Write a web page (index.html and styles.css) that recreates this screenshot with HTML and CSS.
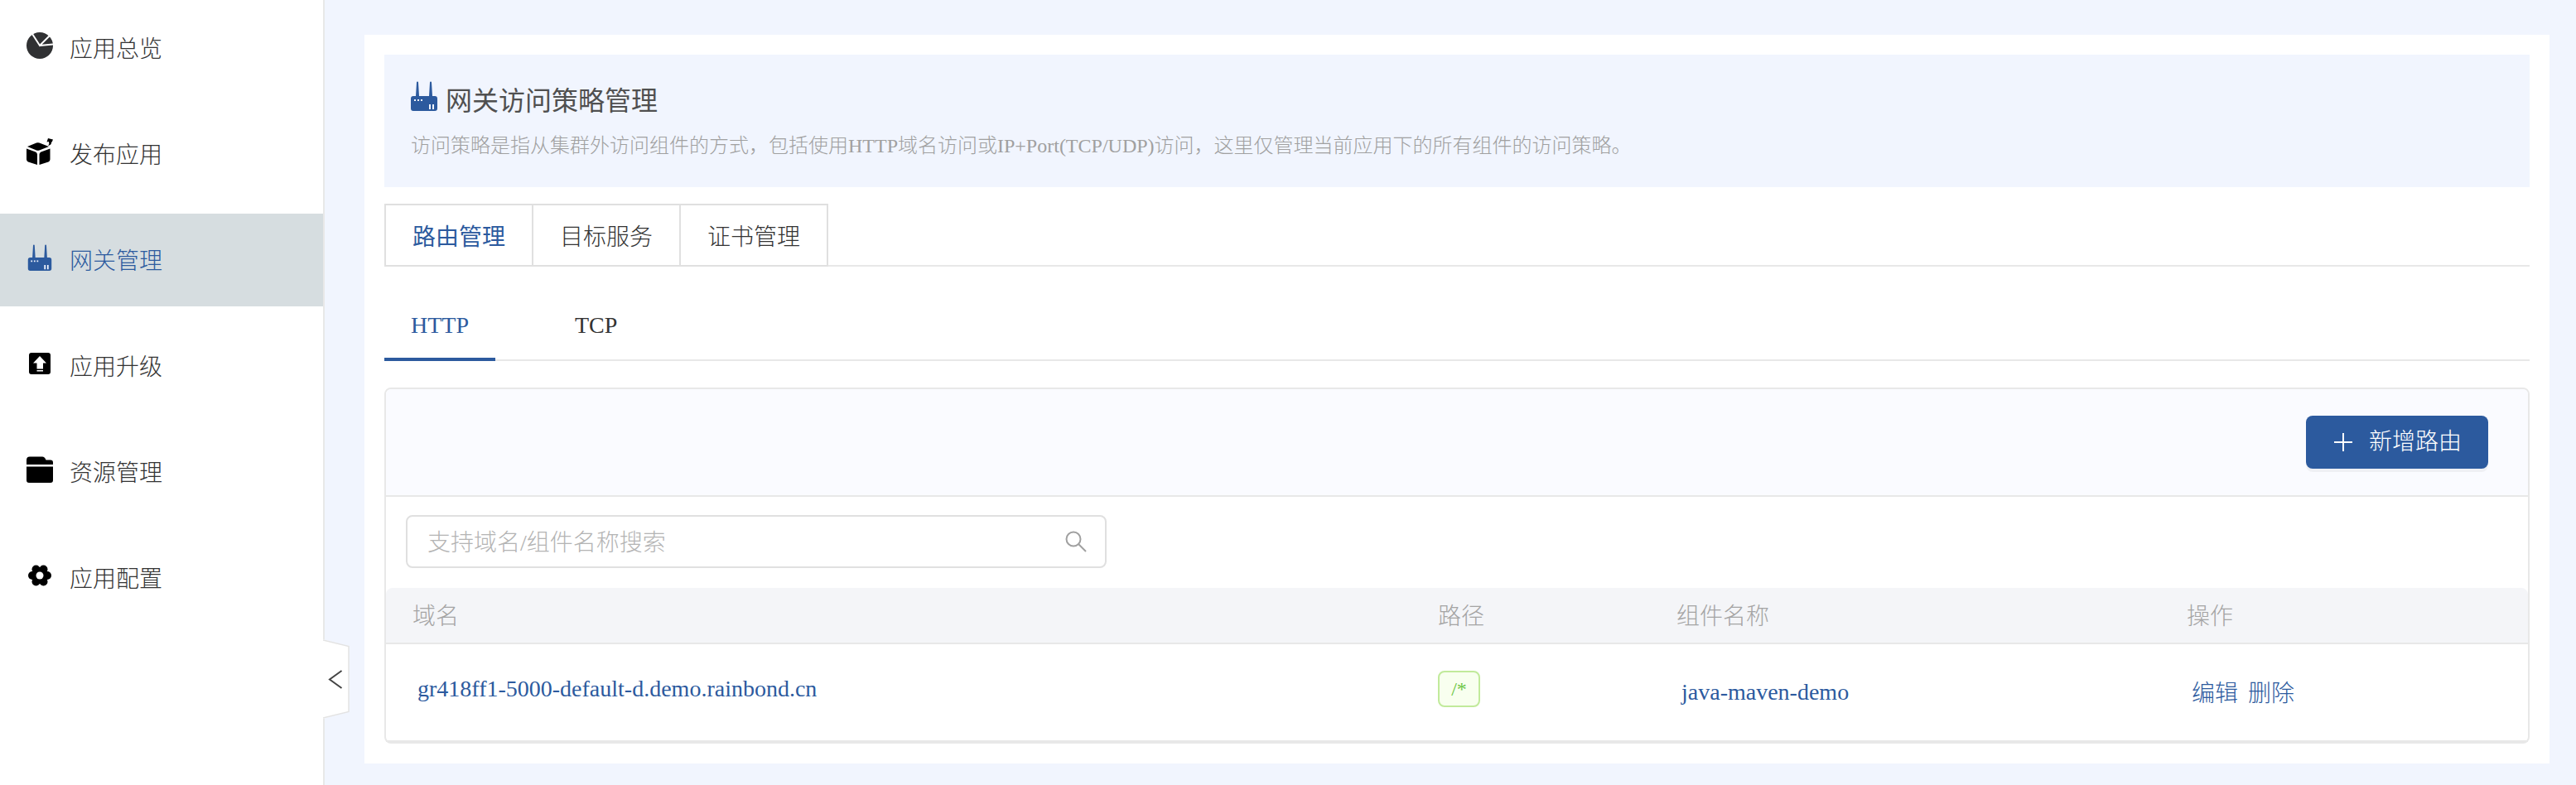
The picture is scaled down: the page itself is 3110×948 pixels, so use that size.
FILE: index.html
```html
<!DOCTYPE html>
<html lang="zh-CN">
<head>
<meta charset="utf-8">
<title>网关管理</title>
<link rel="stylesheet" href="styles.css">
</head>
<body>
<svg class="sprite" aria-hidden="true">
  <symbol id="router" viewBox="0 0 32 36">
    <path d="M6 18 7 1.5a1 1 0 0 1 2 0L10 18H29a3 3 0 0 1 3 3V33a3 3 0 0 1-3 3H3a3 3 0 0 1-3-3V21a3 3 0 0 1 3-3ZM22 18 23 1.5a1 1 0 0 1 2 0L26 18Z" fill="currentColor"/>
    <path d="M4 22h2v2H4Zm4 0h2v2H8Zm4 0h2v2h-2ZM22 28h2v6h-2Zm4 0h2v6h-2Z" fill="#f1f5fe"/>
  </symbol>
</svg>
<div class="layout">
  <aside class="sidebar">
    <nav class="menu">
      <a class="menu-item" href="#">
        <svg class="menu-icon" viewBox="0 0 32 32"><circle cx="16" cy="16" r="16" fill="#303133"/><path d="M7 2 16 16 28 4M16 16 33 14.500" fill="none" stroke="#fff" stroke-width="2"/></svg>
        <span>应用总览</span>
      </a>
      <a class="menu-item" href="#">
        <svg class="menu-icon" viewBox="0 0 32 32"><path d="M1 10 12 5.500q1.800-.7 3.500 0L27 10 15.500 14.500q-1.700.6-3.500 0ZM0 12.500 11 16.500q2 .8 2 3V32L2 28.500q-2-.8-2-3ZM28.500 12.500 17.500 16.500q-2 .8-2 3V32l11-3.500q2-.8 2-3ZM26 0 32 1.500 30.500 5 29.800 4Q31 8 26 9 28 7 27 4l-2.500.5Z" fill="#000"/></svg>
        <span>发布应用</span>
      </a>
      <a class="menu-item active" href="#" aria-current="page">
        <svg class="menu-icon"><use href="#router"/></svg>
        <span>网关管理</span>
      </a>
      <a class="menu-item" href="#">
        <svg class="menu-icon" viewBox="0 0 32 32"><rect x="3" y="3" width="26" height="26" rx="3"/><path d="M16 7 24 15.500H20V22.500H12.500V15.500H8ZM12.500 24H20v1.500H12.500Z" fill="#fff"/></svg>
        <span>应用升级</span>
      </a>
      <a class="menu-item" href="#">
        <svg class="menu-icon" viewBox="0 0 32 32"><path d="M0 10V4.500Q0 .5 4 .5H19q3 0 4.500 4H29q3 0 3 3V10ZM0 12.500H32V29q0 3-3 3H3q-3 0-3-3Z"/></svg>
        <span>资源管理</span>
      </a>
      <a class="menu-item" href="#">
        <svg class="menu-icon" viewBox="0 0 32 32"><g><circle cx="16" cy="16" r="10"/><circle cx="7" cy="16" r="5"/><circle cx="25" cy="16" r="5"/><circle cx="11.500" cy="8.500" r="5"/><circle cx="20.500" cy="8.500" r="5"/><circle cx="11.500" cy="23.500" r="5"/><circle cx="20.500" cy="23.500" r="5"/></g><circle cx="16" cy="16" r="4.500" fill="#fff"/></svg>
        <span>应用配置</span>
      </a>
    </nav>
    <button class="collapse" type="button" aria-label="收起">
      <svg class="collapse-icon" viewBox="0 0 32 96"><path d="M0 0 31 8.500V87.500L0 96Z" fill="#fff"/><path d="M0 1 31 8.500V87.500L0 95" fill="none" stroke="#e3e3e3" stroke-width="1.500"/><path d="M22.500 38 8 48.500 22.500 59" fill="none" stroke="#444" stroke-width="2"/></svg>
    </button>
  </aside>
  <main class="content">
    <div class="panel">
      <header class="intro">
        <h1 class="intro-title"><svg class="intro-icon"><use href="#router"/></svg>网关访问策略管理</h1>
        <p class="intro-text">访问策略是指从集群外访问组件的方式，包括使用HTTP域名访问或IP+Port(TCP/UDP)访问，这里仅管理当前应用下的所有组件的访问策略。</p>
      </header>
      <div class="tabs" role="tablist">
        <button class="tab active" type="button" role="tab" aria-selected="true">路由管理</button>
        <button class="tab" type="button" role="tab" aria-selected="false">目标服务</button>
        <button class="tab" type="button" role="tab" aria-selected="false">证书管理</button>
      </div>
      <div class="subtabs" role="tablist">
        <button class="subtab active" type="button" role="tab" aria-selected="true">HTTP</button>
        <button class="subtab" type="button" role="tab" aria-selected="false">TCP</button>
      </div>
      <section class="card">
        <div class="card-head">
          <button class="add" type="button">
            <svg class="add-icon" viewBox="0 0 22 22"><path d="M11 0V22M0 11H22" stroke="#fff" stroke-width="2"/></svg>
            <span>新增路由</span>
          </button>
        </div>
        <div class="filter">
          <label class="search">
            <input class="search-input" type="text" aria-label="搜索" placeholder="支持域名/组件名称搜索">
            <svg class="search-icon" viewBox="0 0 26 26"><circle cx="10" cy="10" r="8.500"/><path d="M16 16 25 25"/></svg>
          </label>
        </div>
        <table class="routes">
          <colgroup><col><col class="col-path"><col class="col-name"><col class="col-action"></colgroup>
          <thead>
            <tr><th>域名</th><th>路径</th><th>组件名称</th><th>操作</th></tr>
          </thead>
          <tbody>
            <tr>
              <td class="cell-raised"><a class="link" href="#">gr418ff1-5000-default-d.demo.rainbond.cn</a></td>
              <td class="cell-raised"><span class="tag">/*</span></td>
              <td><a class="link" href="#">java-maven-demo</a></td>
              <td><div class="actions"><a class="link" href="#">编辑</a><a href="#">删除</a></div></td>
            </tr>
          </tbody>
        </table>
      </section>
    </div>
  </main>
</div>
</body>
</html>
```
FILE: styles.css
```css
* { box-sizing: border-box; }
body {
  margin: 0;
  background: #f1f5fe;
  color: #333;
  font: 300 28px/40px "Liberation Serif", "Noto Sans CJK SC", serif;
}
button, input { font: inherit; color: inherit; }
button { cursor: pointer; }
a { color: #2c5a9e; text-decoration: none; }
svg { display: block; flex: none; }
.sprite { position: absolute; width: 0; height: 0; }

.layout { display: flex; min-height: 100vh; }
.sidebar {
  position: relative;
  flex: none;
  width: 392px;
  padding-top: 2px;
  background: #fff;
  border-right: 2px solid #e8e8e8;
}
.menu { display: flex; flex-direction: column; gap: 16px; }
.menu-item {
  display: flex;
  align-items: center;
  gap: 20px;
  height: 112px;
  padding: 4px 32px 0;
  color: #333;
}
.menu-item.active { background: #d6dde0; color: #2c5a9e; }
.menu-icon { width: 32px; height: 32px; margin-bottom: 10px; }
.collapse {
  position: absolute;
  top: 772px;
  left: 100%;
  padding: 0;
  border: 0;
  background: none;
}
.collapse-icon { width: 32px; height: 96px; }

.content { flex: 1; min-width: 0; padding: 42px 32px 26px 48px; }
.panel { padding: 24px; background: #fff; }
.intro { height: 160px; padding: 32px; background: #f1f5fe; }
.intro-title {
  display: flex;
  align-items: center;
  gap: 10px;
  margin: 0 0 6px;
  font-size: 32px;
  line-height: 48px;
  font-weight: 400;
  color: #505050;
}
.intro-icon { width: 32px; height: 36px; margin-bottom: 12px; color: #2c5a9e; }
.intro-text { margin: 0; font-size: 24px; line-height: 48px; color: #a0a0a0; }

.tabs { display: flex; margin-top: 20px; border-bottom: 2px solid #e8e8e8; }
.tab {
  height: 76px;
  margin: 0 -2px -2px 0;
  padding: 6px 32px 0;
  border: 2px solid #e0e0e0;
  background: #fff;
}
.tab.active { color: #2c5a9e; font-weight: 400; }
.subtabs { display: flex; gap: 64px; margin-top: 28px; border-bottom: 2px solid #e8e8e8; }
.subtab {
  height: 86px;
  margin-bottom: -2px;
  padding: 4px 32px 0;
  border: 0;
  border-bottom: 4px solid transparent;
  background: none;
}
.subtab.active { color: #2c5a9e; border-color: #2c5a9e; }

.card { margin-top: 32px; border: 2px solid #e8e8e8; border-radius: 8px; }
.card-head {
  display: flex;
  justify-content: flex-end;
  padding: 32px 48px;
  border-bottom: 2px solid #e8e8e8;
  border-radius: 6px 6px 0 0;
  background: #fafbff;
}
.add {
  display: flex;
  align-items: center;
  gap: 20px;
  height: 64px;
  padding: 0 32px 0 34px;
  border: 0;
  border-radius: 8px;
  background: #2c5a9e;
  box-shadow: 0 4px 0 rgba(0, 0, 0, .045);
  color: #fff;
}
.add-icon { width: 22px; height: 22px; }
.filter { padding: 22px 24px 24px; }
.search {
  display: flex;
  align-items: center;
  width: 846px;
  height: 64px;
  padding: 0 22px 0 24px;
  border: 2px solid #e0e0e0;
  border-radius: 8px;
}
.search-input { flex: 1; min-width: 0; padding: 4px 0 0; border: 0; outline: 0; background: none; }
.search-input::placeholder { color: #b4b4b4; }
.search-icon { width: 26px; height: 26px; fill: none; stroke: #a0a0a0; stroke-width: 2; }

.routes { width: 100%; table-layout: fixed; border-collapse: separate; border-spacing: 0; }
.col-path { width: 288px; }
.col-name { width: 616px; }
.col-action { width: 444px; }
.routes th {
  height: 68px;
  padding: 4px 32px 0;
  border-bottom: 2px solid #e8e8e8;
  background: #f4f5f8;
  color: #a4a4a4;
  font-weight: 300;
  text-align: left;
}
.routes th:first-child { border-top-left-radius: 8px; }
.routes th:last-child { border-top-right-radius: 8px; }
.routes td { height: 118px; padding: 0 32px; border-bottom: 2px solid #e8e8e8; }
.routes .cell-raised { padding-bottom: 8px; }
.link { padding-left: 6px; }
.actions { display: flex; gap: 12px; padding-top: 4px; }
.tag {
  display: block;
  width: 51px;
  height: 44px;
  border: 2px solid #c1ea9b;
  border-radius: 8px;
  background: #f8ffef;
  color: #6cc644;
  font-size: 24px;
  line-height: 40px;
  text-align: center;
}
```
